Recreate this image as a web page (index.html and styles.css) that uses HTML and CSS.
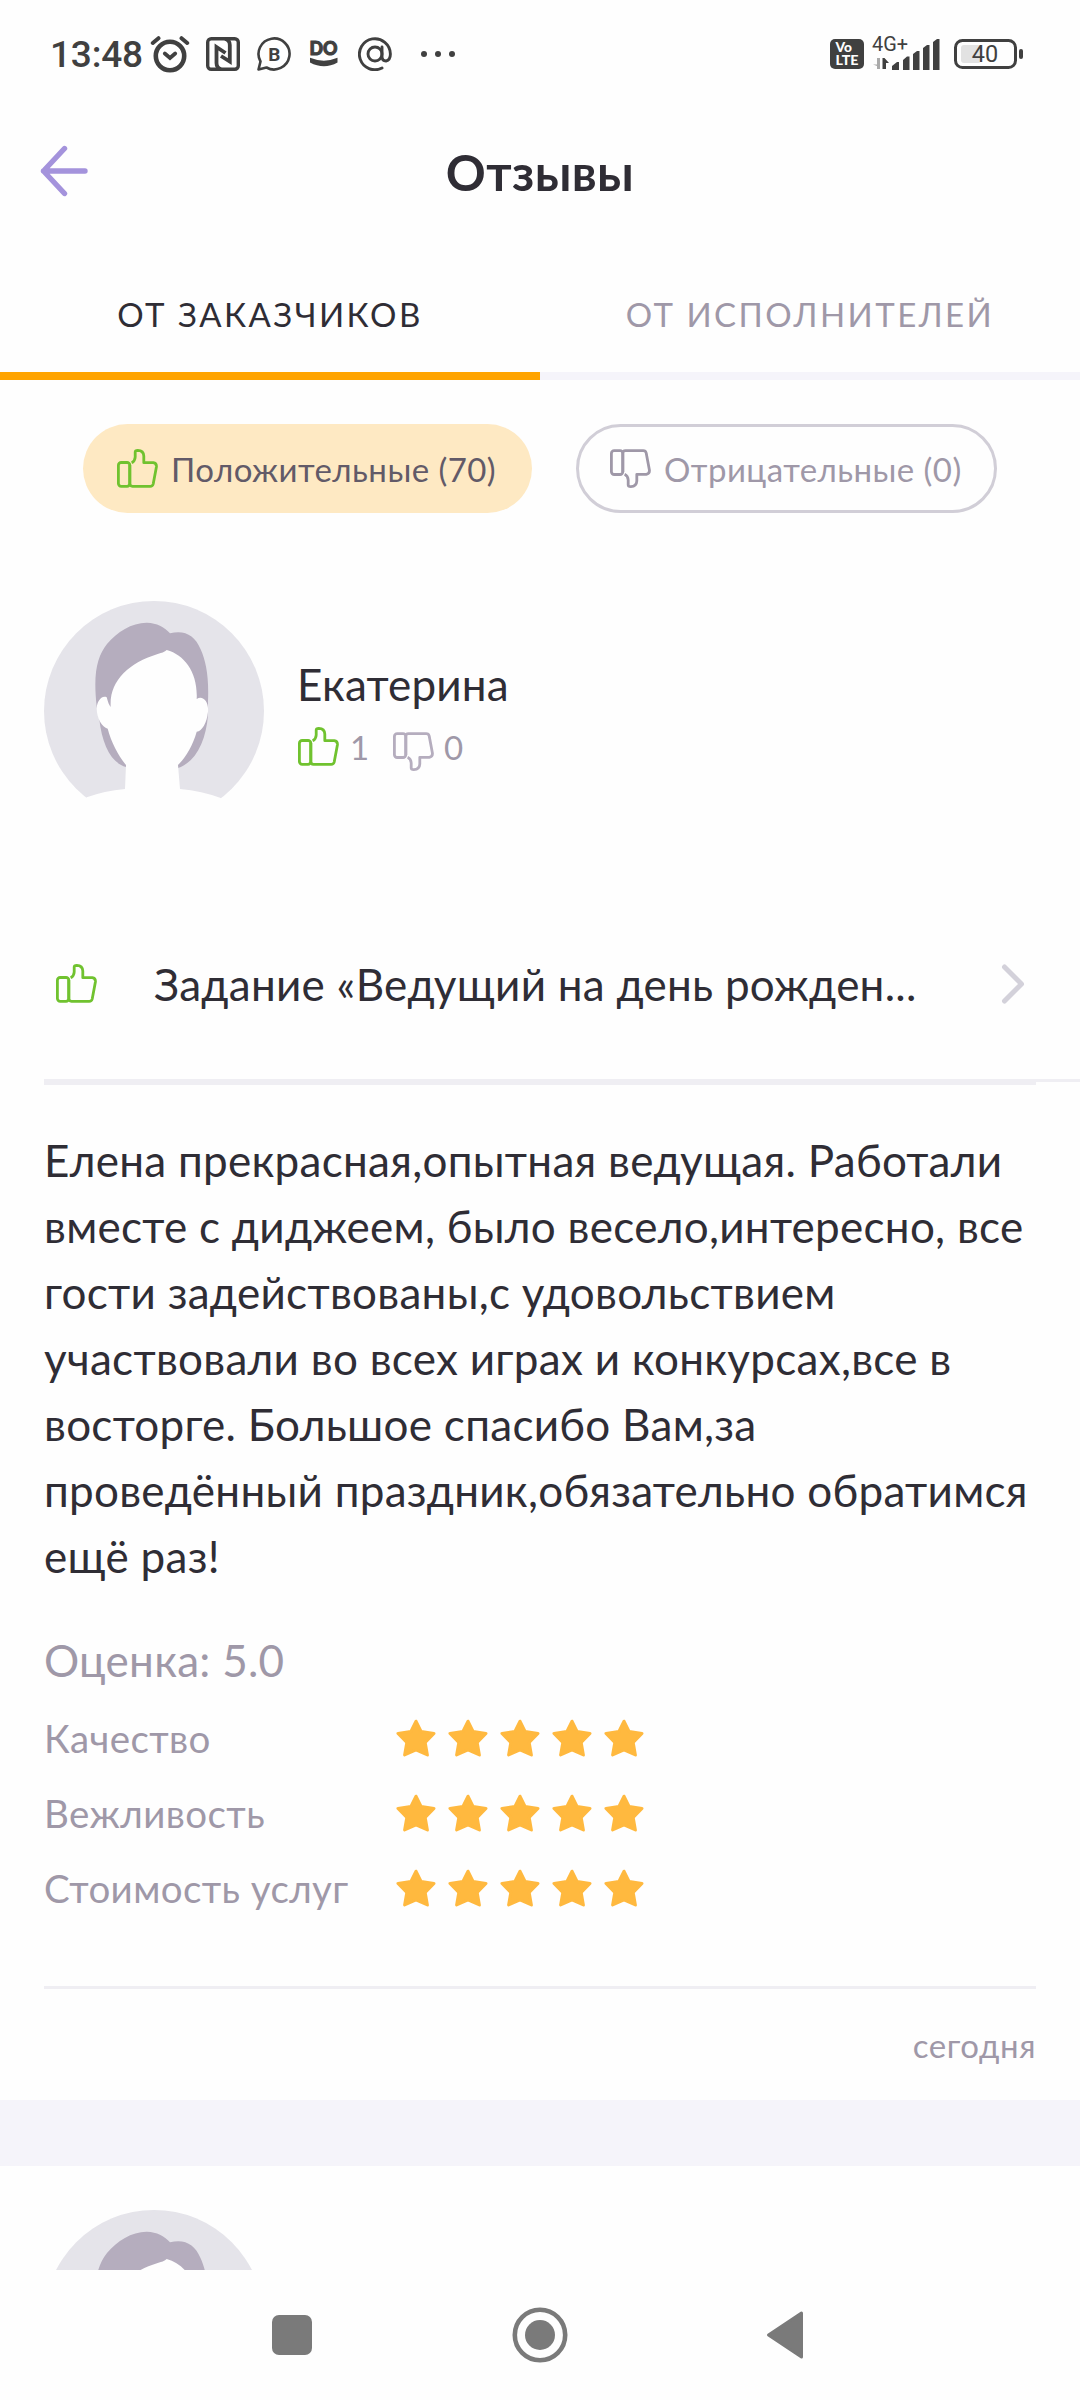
FILE: index.html
```html
<!DOCTYPE html>
<html lang="ru">
<head>
<meta charset="utf-8">
<title>Отзывы</title>
<link rel="stylesheet" href="styles.css">
</head>
<body>
<svg class="defs" width="0" height="0" aria-hidden="true">
  <symbol id="thumb" viewBox="0 0 41 39">
    <g fill="none" stroke="currentColor" stroke-width="2.8" stroke-linejoin="round">
      <rect x="1.4" y="13.5" width="11.400" height="23.800" rx="2.800"/>
      <path d="M12.800 16V34.600Q12.800 37.300 15.500 37.300H33.200Q35.600 37.300 36.200 35L39.400 18Q39.800 14.200 36.300 13.700H26.800V7Q26.600 1.600 20.800 1.400Q18.200 1.400 18.200 3V8Q18 12.300 14.600 13.800"/>
    </g>
  </symbol>
  <symbol id="star" viewBox="0 0 40 38">
    <path d="M20 2.200L25.200 12.600L38 14.400L29.200 23.500L31.400 36L20 31L8.600 36L10.800 23.500L2 14.400L14.800 12.600Z" fill="#ffb93f" stroke="#ffb93f" stroke-width="3" stroke-linejoin="round"/>
  </symbol>
  <symbol id="avatar" viewBox="0 0 220 220">
    <circle cx="110" cy="110" r="110" fill="#e5e4ea"/>
    <path fill="#b5adbe" d="M52.700 106C49 72 53 56 63 43C73 31 88 21.500 103 21.700C113 22 120 26 126 32.300C140 28.500 151 34 156.500 48C162 60 165 76 164 100L164 114C162 140 152 161 134 167L82 166C67 162 58 143 55.300 118Z"/>
    <path fill="#fefefe" d="M122.700 49C121 51 117 52 113 53.300C85 62 65 80 66.700 106C65 104 64 101 62.700 96.200C57 94 53 101 52.700 107C52.500 117 58 126 63.700 127.800C67 141 75 156 82 164L81 188Q60 190 42.700 196.300L30 220H190L176.700 197Q158 190 136 188L134 164C142 156 149 144 152.700 130.700C158 130 163 122 164 110.700C165 101 159 94 152.700 98C154 72 141 54 122.700 49Z"/>
  </symbol>
</svg>

<header class="status">
  <span class="clock">13:48</span>
  <svg class="ic-alarm" width="40" height="40" viewBox="0 0 40 40" fill="none" stroke="#404040" stroke-linecap="round">
    <circle cx="20" cy="22" r="14.200" stroke-width="4.600"/>
    <path d="M14.800 19.500L20 24L25.200 19.500" stroke-width="3.800"/>
    <path d="M2.800 9L8.500 4.200M37.200 9L31.500 4.200" stroke-width="4"/>
  </svg>
  <svg class="ic-nfc" width="34" height="34" viewBox="0 0 34 34" fill="none" stroke="#404040">
    <rect x="1.700" y="1.700" width="30.600" height="30.600" rx="3.500" stroke-width="3.400"/>
    <path d="M15 32Q10.500 31 10.500 26V10L19.500 16" stroke-width="3.800"/>
    <path d="M19 2Q23.800 3 23.800 8V24.500L15 19" stroke-width="3.800"/>
  </svg>
  <svg class="ic-chat" width="34" height="34" viewBox="0 0 34 34">
    <path d="M1.500 32.500L3.500 24.500A15.500 15.500 0 1 1 9.500 30.500Z" fill="none" stroke="#404040" stroke-width="2.600" stroke-linejoin="round"/>
    <text x="17.200" y="23.800" class="chat-b">B</text>
  </svg>
  <svg class="ic-do" width="30" height="40" viewBox="0 -6 30 40">
    <text x="0.500" y="15.300" class="do-text" textLength="28" lengthAdjust="spacingAndGlyphs">DO</text>
    <path d="M1 17.800Q15 23.500 28.500 17.800V22.500Q15 30 1 22.500Z" fill="#404040"/>
  </svg>
  <svg class="ic-at" width="34" height="34" viewBox="0 0 34 34" fill="none" stroke="#404040" stroke-width="2.900" stroke-linecap="round">
    <circle cx="17" cy="17" r="7"/>
    <path d="M24 10V19.500Q24 24 28 24Q32.400 23 32.400 17A15.500 15.500 0 1 0 24 31"/>
  </svg>
  <svg class="ic-dots" width="36" height="8" viewBox="0 0 36 8" fill="#404040">
    <circle cx="4" cy="4" r="3"/><circle cx="18" cy="4" r="3"/><circle cx="32" cy="4" r="3"/>
  </svg>
  <svg class="ic-volte" width="34" height="30" viewBox="0 0 34 30">
    <rect width="34" height="30" rx="5" fill="#404040"/>
    <text x="5.500" y="13" class="volte" textLength="16.500" lengthAdjust="spacingAndGlyphs">Vo</text>
    <text x="5.500" y="25.700" class="volte" textLength="23" lengthAdjust="spacingAndGlyphs">LTE</text>
  </svg>
  <svg class="ic-signal" width="70" height="48" viewBox="0 -6 70 48" fill="#404040">
    <text x="0" y="14.500" class="net" textLength="36" lengthAdjust="spacingAndGlyphs">4G+</text>
    <path d="M8 22V33H5V30L1 28.500H5V22Z" fill="#aaa"/>
    <path d="M10.500 22H12.500L17 27H14V33H10.500Z"/>
    <path d="M20 34V30L25 26H27V34ZM31 34V24L35 20.500H37.500V34ZM41 34V18L45 15H47.500V34ZM51 34V12L55 9H57.500V34ZM61 34V6L65 3H67.500V34Z"/>
  </svg>
  <svg class="ic-battery" width="70" height="30" viewBox="0 0 70 30">
    <rect x="1.500" y="1.500" width="60" height="27" rx="7" fill="none" stroke="#404040" stroke-width="3"/>
    <rect x="7" y="6" width="20" height="18" rx="3" fill="#e2e2e2"/>
    <rect x="65" y="10" width="4" height="10" rx="2" fill="#404040"/>
    <text x="31" y="23.300" class="batt">40</text>
  </svg>
</header>

<nav class="appbar">
  <svg class="back" width="48" height="52" viewBox="0 0 48 52" fill="none" stroke="#a493dc" stroke-width="5.400" stroke-linecap="round" stroke-linejoin="round">
    <path d="M45 26H3.500M24.500 3.500L3.500 26L24.500 48.500"/>
  </svg>
  <h1 class="title">Отзывы</h1>
</nav>

<div class="tabs">
  <div class="tab tab-on">ОТ ЗАКАЗЧИКОВ</div>
  <div class="tab">ОТ ИСПОЛНИТЕЛЕЙ</div>
</div>

<div class="filters">
  <div class="pill pill-on"><svg class="thumb green"><use href="#thumb"/></svg><span>Положительные (70)</span></div>
  <div class="pill pill-off"><svg class="thumb down grey"><use href="#thumb"/></svg><span>Отрицательные (0)</span></div>
</div>

<main class="feed">
  <article class="review">
    <div class="author">
      <svg class="avatar"><use href="#avatar"/></svg>
      <div class="who">
        <div class="name">Екатерина</div>
        <div class="counts">
          <svg class="thumb green"><use href="#thumb"/></svg><span class="n1">1</span>
          <svg class="thumb down light"><use href="#thumb"/></svg><span class="n0">0</span>
        </div>
      </div>
    </div>
    <div class="task">
      <svg class="thumb green"><use href="#thumb"/></svg>
      <span class="task-name">Задание «Ведущий на день рожден...</span>
      <svg class="chevron" width="24" height="40" viewBox="0 0 24 40" fill="none" stroke="#d3d1da" stroke-width="5" stroke-linecap="round" stroke-linejoin="round"><path d="M3.500 3L20.500 20L3.500 37"/></svg>
    </div>
    <div class="rule-wide"></div>
    <div class="body">
      <p class="text">Елена прекрасная,опытная ведущая. Работали<br>вместе с диджеем, было весело,интересно, все<br>гости задействованы,с удовольствием<br>участвовали во всех играх и конкурсах,все в<br>восторге. Большое спасибо Вам,за<br>проведённый праздник,обязательно обратимся<br>ещё раз!</p>
      <div class="score">Оценка: 5.0</div>
      <div class="rate"><span class="label">Качество</span><span class="stars"><svg><use href="#star"/></svg><svg><use href="#star"/></svg><svg><use href="#star"/></svg><svg><use href="#star"/></svg><svg><use href="#star"/></svg></span></div>
      <div class="rate"><span class="label">Вежливость</span><span class="stars"><svg><use href="#star"/></svg><svg><use href="#star"/></svg><svg><use href="#star"/></svg><svg><use href="#star"/></svg><svg><use href="#star"/></svg></span></div>
      <div class="rate"><span class="label">Стоимость услуг</span><span class="stars"><svg><use href="#star"/></svg><svg><use href="#star"/></svg><svg><use href="#star"/></svg><svg><use href="#star"/></svg><svg><use href="#star"/></svg></span></div>
      <div class="date">сегодня</div>
    </div>
  </article>
  <div class="gap"></div>
  <article class="review">
    <div class="author"><svg class="avatar"><use href="#avatar"/></svg></div>
  </article>
</main>

<footer class="sysnav">
  <svg width="40" height="40" viewBox="0 0 40 40"><rect width="40" height="40" rx="7" fill="#7a7a7a"/></svg>
  <svg class="home" width="56" height="56" viewBox="0 0 56 56"><circle cx="28" cy="28" r="25.200" fill="none" stroke="#7a7a7a" stroke-width="4.600"/><circle cx="28" cy="28" r="15" fill="#7a7a7a"/></svg>
  <svg width="38" height="48" viewBox="0 0 38 48"><path d="M35.500 2V46L2.500 24Z" fill="#7a7a7a" stroke="#7a7a7a" stroke-width="3" stroke-linejoin="round"/></svg>
</footer>
</body>
</html>
```
FILE: styles.css
```css
* { box-sizing: border-box; }
body {
  margin: 0;
  width: 1080px;
  height: 2400px;
  overflow: hidden;
  background: #fefefe;
  color: #2f2d35;
  font-family: Lato, "Open Sans", sans-serif;
  display: flex;
  flex-direction: column;
}
svg { display: block; flex: none; }
.defs { height: 0; }

.status { height: 108px; display: flex; align-items: center; padding: 0 0 0 50px; }
.clock { font: 500 37px/44px Roboto, sans-serif; color: #404040; width: 100px; letter-spacing: -0.2px; padding-top: 2px; white-space: nowrap; }
.ic-nfc { margin-left: 16px; }
.ic-chat { margin-left: 17px; }
.ic-do { margin-left: 18px; }
.ic-at { margin-left: 19px; }
.ic-dots { margin-left: 28px; }
.ic-volte { margin-left: auto; }
.ic-signal { margin-left: 8px; }
.ic-battery { margin: 0 56px 0 12px; }
.chat-b { font: 700 19px Roboto, sans-serif; fill: #404040; text-anchor: middle; }
.do-text { font: 900 18px Lato, sans-serif; fill: #404040; stroke: #404040; stroke-width: 1px; }
.volte { font: 900 12.500px Lato, sans-serif; fill: #fefefe; }
.net { font: 400 20px Roboto, sans-serif; }
.batt { font: 400 23.500px Roboto, sans-serif; fill: #404040; text-anchor: middle; }

.appbar { height: 144px; display: grid; grid-template-columns: 88px 1fr 88px; align-items: start; }
.back { margin: 37px 0 0 40px; }
.title { margin: 35px 0 0; text-align: center; font-size: 49.500px; line-height: 58px; font-weight: 700; letter-spacing: 0.4px; }

.tabs { display: flex; height: 128px; }
.tab { flex: 1; text-align: center; font-size: 33px; line-height: 40px; padding-top: 42px; border-bottom: 8px solid #f5f4fa; color: #9f98a8; letter-spacing: 2.450px; }
.tab-on { color: #2f2d35; border-bottom-color: #ffa400; }

.filters { display: flex; gap: 44px; padding: 44px 83px 0; height: 221px; }
.pill { height: 89px; border-radius: 45px; display: flex; align-items: center; gap: 13px; padding-left: 34px; font-size: 33px; line-height: 40px; white-space: nowrap; letter-spacing: 0.450px; }
.pill span { padding-top: 1px; }
.pill-on { width: 449px; background: #fee9c3; color: #625a68; }
.pill-off { width: 421px; border: 3px solid #d1ced7; padding-left: 31px; color: #9f98a8; }

.thumb { width: 41px; height: 39px; }
.down { transform: scaleY(-1); }
.green { color: #70c22f; }
.grey { color: #9f98a8; }
.light { color: #b5adbe; }

.feed { height: 1669px; overflow: hidden; }
.author { display: flex; height: 301px; padding-left: 44px; }
.avatar { width: 220px; height: 220px; }
.who { padding: 55px 0 0 33px; }
.name { font-size: 44px; line-height: 56px; letter-spacing: 0.200px; }
.counts { display: flex; align-items: center; height: 52px; margin-top: 9px; font-size: 33px; line-height: 40px; color: #9f98a8; }
.counts .green { margin: -2px 0 0 1px; }
.n1 { width: 45px; padding-left: 11px; }
.counts .light { margin: 8px 0 0 9px; }
.n0 { padding-left: 10px; }

.task { height: 177px; display: flex; align-items: flex-start; padding: 62px 55px 0 56px; }
.task-name { font-size: 44px; line-height: 54px; margin: -7px 0 0 57px; white-space: nowrap; letter-spacing: 0.260px; }
.chevron { margin-left: auto; }
.rule-wide { height: 6px; margin-left: 44px; border-top: 3px solid #efeef3; background: linear-gradient(#efeef3, #efeef3) no-repeat 0 0 / 992px 3px; }

.body { padding: 42px 44px 0; }
.text { margin: 0; font-size: 44px; line-height: 66px; white-space: nowrap; letter-spacing: 0.290px; }
.score { font-size: 44px; line-height: 54px; margin-top: 44px; color: #9f98a8; letter-spacing: 0.280px; }
.rate { display: flex; align-items: center; height: 75px; font-size: 38.500px; color: #9f98a8; letter-spacing: 0.400px; }
.score + .rate { margin-top: 13px; }
.label { width: 352px; }
.stars { display: flex; gap: 12px; }
.stars svg { width: 40px; height: 38px; }
.date { margin-top: 61px; border-top: 3px solid #efeef3; height: 114px; padding-top: 36px; text-align: right; font-size: 33px; line-height: 40px; color: #9f98a8; letter-spacing: 0.600px; }

.gap { height: 66px; background: #f5f4fa; margin-bottom: 44px; }

.sysnav { height: 130px; display: flex; align-items: center; padding-left: 272px; }
.home { margin: 0 198px 0 200px; }
```
